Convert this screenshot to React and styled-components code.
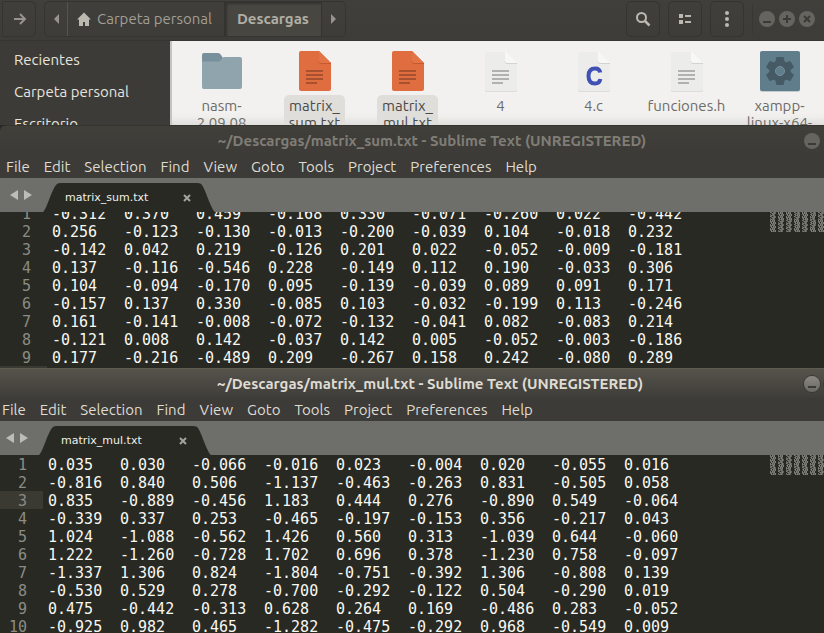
import React from "react";
import styled, { createGlobalStyle, css } from "styled-components";

const Global = createGlobalStyle`
  * { box-sizing: border-box; }
  html, body { margin: 0; background: #282923; }
  body { overflow: hidden; }
  button { font: inherit; color: inherit; background: none; border: 0; padding: 0; margin: 0; }
`;

const ui = `"Ubuntu", "Noto Sans", sans-serif`;

const Desktop = styled.main`
  display: grid;
  grid-template-rows: 125px 243px minmax(0, 1fr);
  height: 100vh;
  overflow: hidden;
  font-family: ${ui};
  font-size: 15px;
`;

/* ---------- file manager ---------- */

const Files = styled.section`
  display: flex;
  flex-direction: column;
  min-height: 0;
  overflow: hidden;
  background: #3d3b37;
`;

const HeaderBar = styled.header`
  display: flex;
  align-items: center;
  flex: none;
  height: 41px;
  padding: 0 9px 3px 0;
  background: linear-gradient(#413f3b, #3d3c38);
  border-bottom: 1px solid #373532;
  color: #a09e96;
`;

const BarButton = styled.button`
  display: flex;
  align-items: center;
  justify-content: center;
  width: 34px;
  height: 36px;
  border: 1px solid #353430;
  border-radius: 5px;
  color: #bbb9b0;
  ${(p) => p.$forward && css`
    width: 34px;
    margin-left: 2px;
    padding-left: 2px;
    border-radius: 0 5px 5px 0;
    color: #96948c;
  `}
`;

const PathBar = styled.nav`
  display: flex;
  height: 36px;
  margin-left: 8px;
  border: 1px solid #353430;
  border-radius: 5px;
  overflow: hidden;
`;

const PathButton = styled.button`
  display: flex;
  align-items: center;
  justify-content: center;
  gap: 5px;
  padding: 0 12px 0 8px;
  border-right: 1px solid #34332f;
  white-space: nowrap;
  ${(p) => p.$arrow && css`
    width: 23px;
    padding: 0;
    border-right-color: #55544f;
    color: #96948c;
  `}
  ${(p) => p.$last && css`border-right: 0;`}
  ${(p) => p.$current && css`
    padding: 0 12px;
    font-weight: 700;
    color: #b0aea5;
    background: #474640;
    box-shadow: inset 2px 2px 2px #34332f;
  `}
`;

const Tools = styled.div`
  display: flex;
  align-items: center;
  gap: 8px;
  margin-left: auto;
`;

const WindowButtons = styled.div`
  display: flex;
  align-items: center;
  gap: 4px;
  height: 30px;
  padding-left: 6px;
  border-left: 1px solid #383733;
`;

const RoundButton = styled.button`
  display: flex;
  width: 16px;
  height: 16px;
  border-radius: 50%;
  background: #66645f;
  color: #3b3a36;
  ${(p) => p.$lit && css`
    background: linear-gradient(#8a8882, #6a6863);
    box-shadow: 0 0 0 1px #3a3935;
  `}
`;

const Browser = styled.div`
  display: flex;
  flex: 1;
  min-height: 0;
`;

const Places = styled.nav`
  flex: none;
  width: 170px;
  padding: 3px 14px;
  background: #3d3b37;
`;

const Place = styled.a`
  display: block;
  line-height: 32px;
  color: #e6e4de;
  text-decoration: none;
  white-space: nowrap;
`;

const FileGrid = styled.div`
  display: flex;
  flex: 1;
  min-width: 0;
  padding: 10px 0 0 3px;
  border-left: 2px solid #c6c4c1;
  background: #f2f1ef;
  box-shadow: inset 0 -12px 8px -8px #dcdbd9;
`;

const FileItem = styled.figure`
  display: flex;
  flex: none;
  flex-direction: column;
  align-items: center;
  width: 93px;
  margin: 0;

  > svg { flex: none; }
`;

const FileName = styled.figcaption`
  flex: none;
  margin-top: 2px;
  padding: 2px 5px;
  border-radius: 5px;
  line-height: 17px;
  text-align: center;
  white-space: pre;
  color: #6e6c68;
  ${(p) => p.$selected && css`
    background: #dfdedb;
    color: #4c4a46;
  `}
`;

/* ---------- editor windows ---------- */

const EditorFrame = styled.section`
  display: flex;
  flex-direction: column;
  min-height: 0;
  width: ${(p) => (p.$active ? "calc(100% + 44px)" : "calc(100% + 40px)")};
  margin-left: ${(p) => (p.$active ? "-4px" : "0")};
  overflow: hidden;
  background: #282923;
`;

const TitleBar = styled.header`
  display: grid;
  grid-template-columns: 1fr auto 1fr;
  align-items: center;
  flex: none;
  height: 30px;
  border-top: 1px solid #35342f;
  border-radius: 6px 0 0 0;
  background: linear-gradient(#403f3a, #3d3b37);
  color: #807d77;
  ${(p) => p.$active && css`
    border-top-color: #5d5b4e;
    border-radius: 0;
    background: linear-gradient(#56534c, #3f3d39);
    color: #dfdbd2;
  `}
`;

const Title = styled.h1`
  grid-column: 2;
  margin: 0;
  font-size: 15px;
  line-height: 20px;
  font-weight: 700;
  white-space: nowrap;
`;

const TitleButtons = styled.div`
  display: flex;
  justify-content: flex-end;
  gap: 4px;
  padding-right: 4px;
`;

const MenuBar = styled.nav`
  display: flex;
  align-items: center;
  flex: none;
  gap: 14px;
  height: 23px;
  padding-left: 6px;
  background: #3d3b37;
  color: #dfdbd2;
`;

const MenuItem = styled.button`
  line-height: 20px;
  white-space: nowrap;
`;

const TabStrip = styled.div`
  display: flex;
  flex: none;
  height: 34px;
  background: #6e6f6a;
`;

const TabArrows = styled.div`
  display: flex;
  align-items: center;
  gap: 6px;
  width: 43px;
  padding-left: 10px;
  color: #bcbcb9;
`;

const Arrow = styled.button`
  display: flex;
`;

const Tab = styled.div`
  display: flex;
  align-items: center;
  justify-content: space-between;
  width: 172px;
  height: 29px;
  margin-top: 5px;
  padding: 0 24px 0 22px;
  background: #282923;
  clip-path: path("M0 29 C4 26 9 5 14 1 Q15 0 18 0 H154 Q158 0 159 2 C163 8 168 26 172 29 Z");
  color: #f0f0ec;
  font-family: "DejaVu Sans", sans-serif;
  font-size: 11px;
`;

const CloseTab = styled.button`
  display: flex;
  color: #a3a39f;
`;

const Editor = styled.div`
  display: flex;
  align-items: flex-start;
  flex: 1;
  min-height: 0;
  overflow: hidden;
  background: #282923;
`;

const Code = styled.table`
  flex: none;
  margin-top: ${(p) => (p.$scrolled ? "-8px" : "0")};
  border-collapse: collapse;
  table-layout: fixed;
  width: 695px;
  font-family: "DejaVu Sans Mono", monospace;
  font-size: 15px;
  line-height: 16px;
  color: #f8f8f2;
`;

const LineNumber = styled.th`
  width: 47px;
  height: 18px;
  padding: 2px 16px 0 0;
  text-align: right;
  font-weight: 400;
  color: #8b8c84;
  background: ${(p) => (p.$current ? "#3a3a32" : "transparent")};
`;

const Cell = styled.td`
  width: 72px;
  height: 18px;
  padding: 2px 0 0 5px;
  white-space: nowrap;
`;

const MiniMap = styled.svg`
  flex: none;
  display: block;
  margin-left: ${(p) => (p.$active ? "79px" : "75px")};
`;

/* ---------- icons ---------- */

const Minus = () => <svg width="16" height="16"><path d="M4 11h8" stroke="currentColor" strokeWidth="2" /></svg>;
const Plus = () => <svg width="16" height="16"><path d="M4 8h8M8 4v8" stroke="currentColor" strokeWidth="2" /></svg>;
const Cross = () => <svg width="16" height="16"><path d="M5 5l6 6M11 5l-6 6" stroke="currentColor" strokeWidth="2" /></svg>;

const Triangle = ({ dir, w = 5, h = 10 }) => (
  <svg width={w} height={h}>
    <path d={dir === "left" ? `M${w} 0V${h}L0 ${h / 2}z` : `M0 0V${h}L${w} ${h / 2}z`} fill="currentColor" />
  </svg>
);

const FolderIcon = () => (
  <svg width="48" height="42" viewBox="0 0 48 42">
    <path d="M4 4a2 2 0 0 1 2-2h14q2 0 3 2l2 3v6H4z" fill="#78909c" />
    <path d="M4 10.500h16.500q1.500 0 2.500-1.500l2-2.500q.500-.5 1.500-.5H42a2 2 0 0 1 2 2V36a2 2 0 0 1-2 2H6a2 2 0 0 1-2-2z" fill="#90a4ae" />
  </svg>
);

const PageIcon = ({ kind }) => {
  const orange = kind === "orange";
  return (
    <svg width="48" height="42" viewBox="0 0 48 42">
      {!orange && <path d="M8 3h20l12 12v24.500q0 1.500-2 1.500H10q-2 0-2-1.500z" fill="#dcdcdb" />}
      <path
        d={orange ? "M8 2a2 2 0 0 1 2-2h18l12 12v26a2 2 0 0 1-2 2H10a2 2 0 0 1-2-2z" : "M8 3a2 2 0 0 1 2-2h18l12 11v26a2 2 0 0 1-2 2H10a2 2 0 0 1-2-2z"}
        fill={orange ? "#df6d40" : "#ececeb"}
      />
      <path d="M28 10v.500a2 2 0 0 0 2 2h10" fill="none" stroke={orange ? "#c7582f" : "#d2d2d1"} />
      <path d="M28 0l12 12H30a2 2 0 0 1-2-2z" fill={orange ? "#e37445" : "#f7f7f6"} />
      {kind === "c" ? (
        <path d="M30.200 21.500Q29.500 17.500 25.200 17.500Q18.500 17.500 18.500 25Q18.500 32.500 25 32.500Q29.600 32.500 30.300 28" fill="none" stroke="#3f51b5" strokeWidth="4" />
      ) : (
        <path d="M15 20h17M15 24h17M15 28h17M15 32h11" stroke={orange ? "#a9502e" : "#b1b1b0"} strokeWidth="2" />
      )}
    </svg>
  );
};

const GearIcon = () => (
  <svg width="48" height="42" viewBox="0 0 48 42">
    <rect x="4" y="1" width="40" height="40" rx="2" fill="#c5cbce" />
    <rect x="4" y="0" width="40" height="40" rx="2" fill="#607d8b" />
    <g transform="translate(24 20)">
      <g fill="#455a64">
        <circle r="10.500" />
        {[0, 60, 120, 180, 240, 300].map((a) => (
          <path key={a} d="M-5-8L-3.500-14h7L5-8z" transform={`rotate(${a})`} />
        ))}
      </g>
      <circle r="4.500" fill="#607d8b" stroke="#78909c" />
    </g>
  </svg>
);

const HomeIcon = () => (
  <svg width="16" height="16" viewBox="0 0 16 16"><path d="M8 1.500L1 8.500h2V15h4v-4h2v4h4V8.500h2z" fill="#bbb9b0" /></svg>
);

/* ---------- data ---------- */

const sum = `-0.312 0.370 0.459 -0.168 0.330 -0.071 -0.260 0.022 -0.442
0.256 -0.123 -0.130 -0.013 -0.200 -0.039 0.104 -0.018 0.232
-0.142 0.042 0.219 -0.126 0.201 0.022 -0.052 -0.009 -0.181
0.137 -0.116 -0.546 0.228 -0.149 0.112 0.190 -0.033 0.306
0.104 -0.094 -0.170 0.095 -0.139 -0.039 0.089 0.091 0.171
-0.157 0.137 0.330 -0.085 0.103 -0.032 -0.199 0.113 -0.246
0.161 -0.141 -0.008 -0.072 -0.132 -0.041 0.082 -0.083 0.214
-0.121 0.008 0.142 -0.037 0.142 0.005 -0.052 -0.003 -0.186
0.177 -0.216 -0.489 0.209 -0.267 0.158 0.242 -0.080 0.289`.split("\n").map((l) => l.split(" "));

const mul = `0.035 0.030 -0.066 -0.016 0.023 -0.004 0.020 -0.055 0.016
-0.816 0.840 0.506 -1.137 -0.463 -0.263 0.831 -0.505 0.058
0.835 -0.889 -0.456 1.183 0.444 0.276 -0.890 0.549 -0.064
-0.339 0.337 0.253 -0.465 -0.197 -0.153 0.356 -0.217 0.043
1.024 -1.088 -0.562 1.426 0.560 0.313 -1.039 0.644 -0.060
1.222 -1.260 -0.728 1.702 0.696 0.378 -1.230 0.758 -0.097
-1.337 1.306 0.824 -1.804 -0.751 -0.392 1.306 -0.808 0.139
-0.530 0.529 0.278 -0.700 -0.292 -0.122 0.504 -0.290 0.019
0.475 -0.442 -0.313 0.628 0.264 0.169 -0.486 0.283 -0.052
-0.925 0.982 0.465 -1.282 -0.475 -0.292 0.968 -0.549 0.009`.split("\n").map((l) => l.split(" "));

const menus = ["File", "Edit", "Selection", "Find", "View", "Goto", "Tools", "Project", "Preferences", "Help"];

const files = [
  { name: "nasm-\n2.09.08", icon: <FolderIcon /> },
  { name: "matrix_\nsum.txt", icon: <PageIcon kind="orange" />, selected: true },
  { name: "matrix_\nmul.txt", icon: <PageIcon kind="orange" />, selected: true },
  { name: "4", icon: <PageIcon /> },
  { name: "4.c", icon: <PageIcon kind="c" /> },
  { name: "funciones.h", icon: <PageIcon /> },
  { name: "xampp-\nlinux-x64-", icon: <GearIcon /> },
];

const LINES = Array.from({ length: 10 }, (_, i) => i);

/* One pixel column per character, two pixel rows per line. */
const Overview = ({ rows, active }) => (
  <MiniMap $active={active} width="72" height="20" shapeRendering="crispEdges" aria-hidden="true">
    {LINES.flatMap((y) =>
      rows[y % rows.length].flatMap((n, c) =>
        [...n].map((ch, i) => (
          <rect
            key={`${y}-${c}-${i}`}
            x={c * 8 + i}
            y={y * 2 + (ch === "." ? 1 : 0)}
            width="1"
            height={ch === "." || ch === "-" ? 1 : 2}
            fill={(i + y) % 2 ? "#62635c" : "#7c7d76"}
          />
        ))
      )
    )}
  </MiniMap>
);

function EditorWindow({ file, rows, active, current }) {
  return (
    <EditorFrame $active={active}>
      <TitleBar $active={active}>
        <Title>~/Descargas/{file} - Sublime Text (UNREGISTERED)</Title>
        <TitleButtons>
          <RoundButton $lit={active} aria-label="Minimizar"><Minus /></RoundButton>
          <RoundButton $lit={active} aria-label="Maximizar"><Plus /></RoundButton>
          <RoundButton $lit={active} aria-label="Cerrar"><Cross /></RoundButton>
        </TitleButtons>
      </TitleBar>
      <MenuBar>
        {menus.map((m) => <MenuItem key={m}>{m}</MenuItem>)}
      </MenuBar>
      <TabStrip>
        <TabArrows>
          <Arrow aria-label="Anterior"><Triangle dir="left" w={8} /></Arrow>
          <Arrow aria-label="Siguiente"><Triangle dir="right" w={8} /></Arrow>
        </TabArrows>
        <Tab>
          {file}
          <CloseTab aria-label="Cerrar pestaña">
            <svg width="8" height="8"><path d="M1 1l6 6M7 1L1 7" stroke="currentColor" strokeWidth="2" /></svg>
          </CloseTab>
        </Tab>
      </TabStrip>
      <Editor>
        <Code $scrolled={!active}>
          <tbody>
            {LINES.map((i) => (
              <tr key={i}>
                <LineNumber scope="row" $current={current === i + 1}>{rows[i] ? i + 1 : null}</LineNumber>
                {rows[i]?.map((n, c) => <Cell key={c}>{n}</Cell>)}
              </tr>
            ))}
          </tbody>
        </Code>
        <Overview rows={rows} active={active} />
      </Editor>
    </EditorFrame>
  );
}

export default function App() {
  return (
    <>
      <Global />
      <Desktop>
        <Files>
          <HeaderBar>
            <BarButton $forward aria-label="Adelante">
              <svg width="14" height="14"><path d="M1 7h11M7 2l5 5-5 5" fill="none" stroke="currentColor" strokeWidth="2" /></svg>
            </BarButton>
            <PathBar>
              <PathButton $arrow aria-label="Atrás"><Triangle dir="left" /></PathButton>
              <PathButton><HomeIcon />Carpeta personal</PathButton>
              <PathButton $current>Descargas</PathButton>
              <PathButton $arrow $last aria-label="Siguiente"><Triangle dir="right" /></PathButton>
            </PathBar>
            <Tools>
              <BarButton aria-label="Buscar">
                <svg width="16" height="16"><circle cx="6.500" cy="6.500" r="4.500" fill="none" stroke="currentColor" strokeWidth="2" /><path d="M9.500 9.500l5 5" stroke="currentColor" strokeWidth="2.500" /></svg>
              </BarButton>
              <BarButton aria-label="Vista">
                <svg width="14" height="12" fill="currentColor"><path d="M1 1h4v4H1zM1 7h4v4H1zM7 2h6v2H7zM7 8h6v2H7z" /></svg>
              </BarButton>
              <BarButton aria-label="Menú">
                <svg width="16" height="16" fill="currentColor"><circle cx="8" cy="2" r="2" /><circle cx="8" cy="8" r="2" /><circle cx="8" cy="14" r="2" /></svg>
              </BarButton>
              <WindowButtons>
                <RoundButton aria-label="Minimizar"><Minus /></RoundButton>
                <RoundButton aria-label="Maximizar"><Plus /></RoundButton>
                <RoundButton aria-label="Cerrar"><Cross /></RoundButton>
              </WindowButtons>
            </Tools>
          </HeaderBar>
          <Browser>
            <Places>
              <Place href="#recientes">Recientes</Place>
              <Place href="#personal">Carpeta personal</Place>
              <Place href="#escritorio">Escritorio</Place>
            </Places>
            <FileGrid>
              {files.map((f) => (
                <FileItem key={f.name}>
                  {f.icon}
                  <FileName $selected={f.selected}>{f.name}</FileName>
                </FileItem>
              ))}
            </FileGrid>
          </Browser>
        </Files>
        <EditorWindow file="matrix_sum.txt" rows={sum} current={10} />
        <EditorWindow file="matrix_mul.txt" rows={mul} active current={3} />
      </Desktop>
    </>
  );
}
